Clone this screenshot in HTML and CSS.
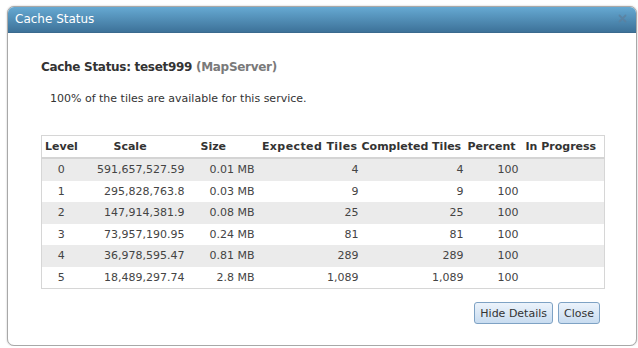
FILE: index.html
```html
<!DOCTYPE html>
<html lang="en">
<head>
  <meta charset="UTF-8">
  <title>Cache Status</title>
  <link rel="stylesheet" href="styles.css">
</head>
<body>

    <div class="dialog">
        <div class="titlebar">
            <span class="title">Cache Status</span>
            <svg class="close-x" width="9" height="9" viewBox="0 0 9 9">
                <path d="M1.5 1.5 L7.5 7.5 M7.5 1.5 L1.5 7.5" stroke="#5d7f9c" stroke-width="1.8" stroke-linecap="round"/>
            </svg>
        </div>
        <div class="content">
            <h2 class="heading">Cache Status: teset999 <span class="type">(MapServer)</span></h2>
            <p class="intro">100% of the tiles are available for this service.</p>

            <table class="tiles">
                <colgroup>
                    <col class="c-level">
                    <col class="c-scale">
                    <col class="c-size">
                    <col class="c-exp">
                    <col class="c-comp">
                    <col class="c-pct">
                    <col class="c-prog">
                </colgroup>
                <thead>
                    <tr>
                        <th class="h-level">Level</th>
                        <th class="h-scale">Scale</th>
                        <th class="h-size">Size</th>
                        <th class="h-exp">Expected Tiles</th>
                        <th class="h-comp">Completed Tiles</th>
                        <th class="h-pct">Percent</th>
                        <th class="h-prog">In Progress</th>
                    </tr>
                </thead>
                <tbody>
                    <tr><td class="d-level">0</td><td class="d-scale">591,657,527.59</td><td class="d-size">0.01 MB</td><td class="d-exp">4</td><td class="d-comp">4</td><td class="d-pct">100</td><td></td></tr>
                    <tr><td class="d-level">1</td><td class="d-scale">295,828,763.8</td><td class="d-size">0.03 MB</td><td class="d-exp">9</td><td class="d-comp">9</td><td class="d-pct">100</td><td></td></tr>
                    <tr><td class="d-level">2</td><td class="d-scale">147,914,381.9</td><td class="d-size">0.08 MB</td><td class="d-exp">25</td><td class="d-comp">25</td><td class="d-pct">100</td><td></td></tr>
                    <tr><td class="d-level">3</td><td class="d-scale">73,957,190.95</td><td class="d-size">0.24 MB</td><td class="d-exp">81</td><td class="d-comp">81</td><td class="d-pct">100</td><td></td></tr>
                    <tr><td class="d-level">4</td><td class="d-scale">36,978,595.47</td><td class="d-size">0.81 MB</td><td class="d-exp">289</td><td class="d-comp">289</td><td class="d-pct">100</td><td></td></tr>
                    <tr><td class="d-level">5</td><td class="d-scale">18,489,297.74</td><td class="d-size">2.8 MB</td><td class="d-exp">1,089</td><td class="d-comp">1,089</td><td class="d-pct">100</td><td></td></tr>
                </tbody>
            </table>

            <div class="buttons">
                <button class="btn">Hide Details</button>
                <button class="btn">Close</button>
            </div>
        </div>
    </div>

</body>
</html>
```

FILE: styles.css
```css
body {
    margin: 0;
    background-color: white;
    font-family: "DejaVu Sans", Verdana, sans-serif;
    color: #333;
}

.dialog {
    margin: 6px 1px 0 7px;
    height: 340px;
    box-sizing: border-box;
    border: 1px solid #a8a8a8;
    border-radius: 7px;
    box-shadow: 0 0 2px rgba(0, 0, 0, 0.25);
    overflow: hidden;
    background-color: white;
}

.titlebar {
    height: 25px;
    display: flex;
    align-items: center;
    justify-content: space-between;
    padding: 0 9px 0 7px;
    background: linear-gradient(#66a9d2, #3d7299);
    border-bottom: 1px solid #3a6a8e;
}

.title {
    color: white;
    font-size: 12px;
    margin-top: -1px;
}

.close-x {
    margin-top: -3px;
    opacity: 0.75;
}

.content {
    padding: 27px 25px 0 33px;
}

.heading {
    margin: 0;
    font-size: 12px;
    letter-spacing: -0.3px;
    font-weight: bold;
    color: #333;
}

.type {
    color: #7a7a7a;
}

.intro {
    margin: 18px 0 0 9px;
    font-size: 11px;
    color: #333;
}

.tiles {
    margin-top: 30px;
    width: 563px;
    table-layout: fixed;
    border-collapse: collapse;
    border: 1px solid #d6d6d6;
    font-size: 11px;
}

.c-level { width: 43px; }
.c-scale { width: 106px; }
.c-size { width: 68px; }
.c-exp { width: 103px; }
.c-comp { width: 105px; }
.c-pct { width: 54px; }
.c-prog { width: 84px; }

.tiles th {
    height: 21px;
    padding: 0;
    font-weight: bold;
    color: #333;
    white-space: nowrap;
    border-bottom: 2px solid #d4d4d4;
}

.tiles td {
    height: 21.5px;
    padding: 0;
    color: #444;
    white-space: nowrap;
}

.tiles tbody tr:nth-child(odd) {
    background-color: #ebebeb;
}

.h-level { text-align: left; padding-left: 3px !important; }
.h-scale { text-align: left; padding-left: 29px !important; }
.h-size { text-align: left; padding-left: 10px !important; }
.h-exp { text-align: right; padding-right: 4px !important; letter-spacing: 0.4px; }
.h-comp { text-align: right; padding-right: 7px !important; }
.h-pct { text-align: left; padding-left: 1px !important; }
.h-prog { text-align: left; padding-left: 5px !important; }

.d-level { text-align: center; padding-right: 4px !important; }
.d-scale { text-align: right; padding-right: 6px !important; }
.d-size { text-align: right; padding-right: 4px !important; }
.d-exp { text-align: right; padding-right: 3px !important; }
.d-comp { text-align: right; padding-right: 3px !important; }
.d-pct { text-align: right; padding-right: 2px !important; }

.buttons {
    display: flex;
    justify-content: flex-end;
    gap: 5px;
    margin-top: 13px;
    width: 559px;
}

.btn {
    height: 22px;
    padding: 0 5px;
    font-family: "DejaVu Sans", Verdana, sans-serif;
    font-size: 11px;
    color: #333;
    background: linear-gradient(#ecf3fb, #c8dcf0);
    border: 1px solid #7ea2c4;
    border-radius: 3px;
}
```
